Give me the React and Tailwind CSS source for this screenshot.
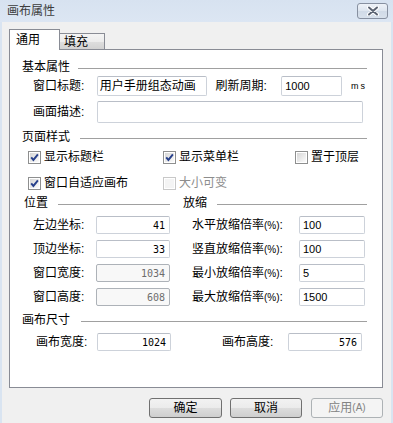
import React from "react";

function Check({ checked, disabled }) {
  return (
    <svg width="13" height="13" viewBox="0 0 13 13" className="shrink-0">
      <defs>
        <linearGradient id="cbg" x1="0" y1="0" x2="1" y2="1">
          <stop offset="0" stopColor="#d6d6d6" />
          <stop offset="1" stopColor="#fbfbfb" />
        </linearGradient>
      </defs>
      <rect x="0.5" y="0.5" width="12" height="12" fill="#fff" stroke={disabled ? "#c8c8c8" : "#8e8f8f"} />
      <rect x="2" y="2" width="9" height="9" fill={disabled ? "#f4f4f4" : "url(#cbg)"} />
      {checked && (
        <path d="M3.2 6.3 L5.4 8.9 L9.9 3.3" fill="none" stroke="#27408b" strokeWidth="1.9" />
      )}
    </svg>
  );
}

function Section({ title, lineClass }) {
  return (
    <div className="flex items-center h-[14px]">
      <span className="leading-[14px] whitespace-nowrap">{title}</span>
      <div className={lineClass} />
    </div>
  );
}

function Input({ className, children }) {
  return (
    <div className={"flex items-center border border-[#cdd2da] border-t-[#b9bec7] rounded-[2px] bg-white overflow-hidden " + className}>
      {children}
    </div>
  );
}

function NumRight({ value, disabled, className }) {
  return (
    <div
      className={
        "flex items-center justify-end pr-[4px] rounded-[2px] font-['DejaVu_Sans_Mono',monospace] text-[10px] " +
        (disabled
          ? "border border-[#adb2b8] bg-[#f8f8f8] text-[#6d6d6d] "
          : "border border-[#cdd2da] border-t-[#b9bec7] bg-white text-black ") +
        className
      }
    >
      {value}
    </div>
  );
}

function NumLeft({ value }) {
  return (
    <div className="w-[66px] h-[18px] flex items-center pl-[3px] border border-[#cdd2da] border-t-[#b9bec7] rounded-[2px] bg-white text-[11px]">
      {value}
    </div>
  );
}

function CloseBtn() {
  return (
    <div className="w-[31px] h-[16px] rounded-[3px] border border-[#8790a0] bg-[linear-gradient(#eef2f8,#dde5ef_50%,#d0dae7_50%,#d8e1ec)] flex items-center justify-center">
      <svg width="14" height="10" viewBox="0 0 14 10">
        <path d="M3 1.5 L11 8.5 M11 1.5 L3 8.5" stroke="#ffffff" strokeWidth="4" strokeLinecap="round" />
        <path d="M3 1.5 L11 8.5 M11 1.5 L3 8.5" stroke="#5b6372" strokeWidth="2" strokeLinecap="round" />
      </svg>
    </div>
  );
}

export default function App() {
  return (
    <div className="w-[393px] h-[423px] bg-[#d9e4f1] flex flex-col overflow-hidden font-['Liberation_Sans','Noto_Sans_CJK_SC',sans-serif] text-[12px] text-black">
      {/* title bar */}
      <div className="h-[22px] shrink-0 flex items-center justify-between pl-[7px] pr-[5px] bg-[linear-gradient(#d7e2f0,#dce6f3)]">
        <span className="text-[#3c3c3c] leading-none">画布属性</span>
        <CloseBtn />
      </div>

      {/* body */}
      <div className="flex-1 mx-[2px] bg-[#f0f0f0] pl-[7px] pt-[7px] flex flex-col">
        {/* tabs */}
        <div className="flex items-end h-[20px]">
          <div className="relative z-10 -mb-px w-[51px] h-[21px] border-l border-t border-r border-[#898c95] bg-white pl-[6px] flex items-center leading-none">
            通用
          </div>
          <div className="w-[45px] h-[16px] border-t border-r border-[#898c95] bg-[linear-gradient(#f4f4f4,#ececec_50%,#dedede_50%,#d2d2d2)] pl-[4px] flex items-center leading-none">
            填充
          </div>
        </div>

        {/* panel */}
        <div className="w-[374px] h-[339px] border border-[#898c95] bg-white pl-[12px] pr-[15px] pt-[10px] flex flex-col">
          <Section title="基本属性" lineClass="flex-1 h-px bg-[#a0a0a0] ml-[8px] mt-[3px]" />

          <div className="mt-[2px] h-[20px] flex items-center">
            <span className="ml-[11px] w-[64px] whitespace-nowrap">窗口标题:</span>
            <Input className="w-[111px] h-[20px] pl-[2px] whitespace-nowrap">用户手册组态动画</Input>
            <span className="ml-[8px] w-[66px] whitespace-nowrap">刷新周期:</span>
            <Input className="w-[61px] h-[20px] pl-[3px] text-[11px]">1000</Input>
            <span className="ml-[9px] text-[9px] tracking-[2px] mt-[1px]">ms</span>
          </div>

          <div className="mt-[5px] h-[22px] flex items-center">
            <span className="ml-[11px] w-[64px] whitespace-nowrap">画面描述:</span>
            <Input className="w-[266px] h-[22px]" />
          </div>

          <div className="mt-[7px]">
            <Section title="页面样式" lineClass="flex-1 h-px bg-[#a0a0a0] ml-[10px] mt-[3px]" />
          </div>

          <div className="mt-[5px] h-[16px] flex items-center">
            <div className="ml-[6px] w-[135px] flex items-center gap-[3px]">
              <Check checked />
              <span className="whitespace-nowrap">显示标题栏</span>
            </div>
            <div className="w-[132px] flex items-center gap-[3px]">
              <Check checked />
              <span className="whitespace-nowrap">显示菜单栏</span>
            </div>
            <div className="flex items-center gap-[3px]">
              <Check />
              <span className="whitespace-nowrap">置于顶层</span>
            </div>
          </div>

          <div className="mt-[10px] h-[16px] flex items-center">
            <div className="ml-[6px] w-[135px] flex items-center gap-[3px]">
              <Check checked />
              <span className="whitespace-nowrap">窗口自适应画布</span>
            </div>
            <div className="w-[132px] flex items-center gap-[3px]">
              <Check disabled />
              <span className="whitespace-nowrap text-[#8d8d8d]">大小可变</span>
            </div>
          </div>

          <div className="mt-[5px] h-[14px] flex">
            <div className="w-[161px] pl-[2px] pr-[13px] flex items-center">
              <span className="leading-[14px] whitespace-nowrap">位置</span>
              <div className="flex-1 h-px bg-[#a0a0a0] ml-[10px] mt-[3px]" />
            </div>
            <div className="flex-1 flex items-center">
              <span className="leading-[14px] whitespace-nowrap">放缩</span>
              <div className="flex-1 h-px bg-[#a0a0a0] ml-[10px] mt-[3px]" />
            </div>
          </div>

          <div className="mt-[6px] flex flex-col gap-[6px]">
            <div className="h-[18px] flex items-center">
              <div className="w-[161px] flex items-center">
                <span className="ml-[11px] w-[63px] whitespace-nowrap">左边坐标:</span>
                <NumRight value="41" className="w-[74px] h-[18px]" />
              </div>
              <span className="ml-[9px] w-[107px] whitespace-nowrap">水平放缩倍率<span className="text-[10px]">(%)</span>:</span>
              <NumLeft value="100" />
            </div>
            <div className="h-[18px] flex items-center">
              <div className="w-[161px] flex items-center">
                <span className="ml-[11px] w-[63px] whitespace-nowrap">顶边坐标:</span>
                <NumRight value="33" className="w-[74px] h-[18px]" />
              </div>
              <span className="ml-[9px] w-[107px] whitespace-nowrap">竖直放缩倍率<span className="text-[10px]">(%)</span>:</span>
              <NumLeft value="100" />
            </div>
            <div className="h-[18px] flex items-center">
              <div className="w-[161px] flex items-center">
                <span className="ml-[11px] w-[63px] whitespace-nowrap">窗口宽度:</span>
                <NumRight value="1034" disabled className="w-[74px] h-[18px]" />
              </div>
              <span className="ml-[9px] w-[107px] whitespace-nowrap">最小放缩倍率<span className="text-[10px]">(%)</span>:</span>
              <NumLeft value="5" />
            </div>
            <div className="h-[18px] flex items-center">
              <div className="w-[161px] flex items-center">
                <span className="ml-[11px] w-[63px] whitespace-nowrap">窗口高度:</span>
                <NumRight value="608" disabled className="w-[74px] h-[18px]" />
              </div>
              <span className="ml-[9px] w-[107px] whitespace-nowrap">最大放缩倍率<span className="text-[10px]">(%)</span>:</span>
              <NumLeft value="1500" />
            </div>
          </div>

          <div className="mt-[7px]">
            <Section title="画布尺寸" lineClass="flex-1 h-px bg-[#a0a0a0] ml-[11px] mt-[3px]" />
          </div>

          <div className="mt-[6px] h-[18px] flex items-center">
            <span className="ml-[14px] w-[61px] whitespace-nowrap">画布宽度:</span>
            <NumRight value="1024" className="w-[74px] h-[18px]" />
            <span className="ml-[51px] w-[66px] whitespace-nowrap">画布高度:</span>
            <NumRight value="576" className="w-[74px] h-[18px]" />
          </div>
        </div>

        {/* buttons */}
        <div className="mt-[10px] w-[374px] flex justify-end">
          <div className="w-[73px] h-[20px] border border-[#707070] rounded-[3px] bg-[linear-gradient(#f2f2f2,#ebebeb_50%,#dddddd_50%,#cfcfcf)] flex items-center justify-center leading-none">
            确定
          </div>
          <div className="ml-[8px] w-[72px] h-[20px] border border-[#707070] rounded-[3px] bg-[linear-gradient(#f2f2f2,#ebebeb_50%,#dddddd_50%,#cfcfcf)] flex items-center justify-center leading-none">
            取消
          </div>
          <div className="ml-[9px] w-[72px] h-[20px] border border-[#adb2b5] rounded-[3px] bg-[#f4f4f4] text-[#838383] flex items-center justify-center leading-none">
            应用<span className="text-[10px]">(A)</span>
          </div>
        </div>
      </div>
    </div>
  );
}
